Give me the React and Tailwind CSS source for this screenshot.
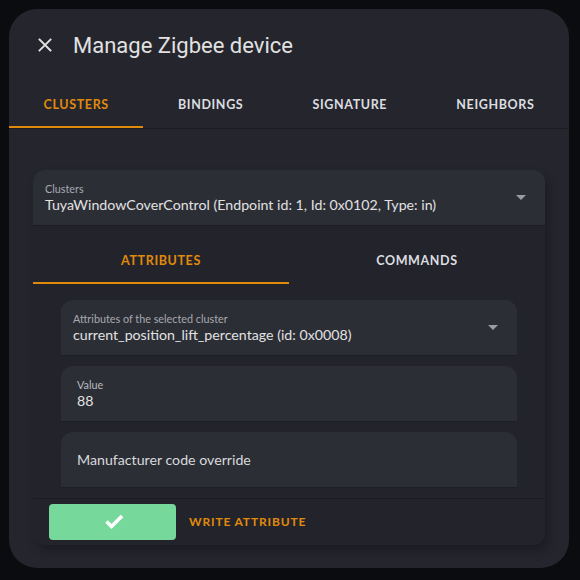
const ui = { fontFamily: 'Lato, "Open Sans", sans-serif' }

export default function App() {
  return (
    <div className="relative h-[580px] w-[580px] overflow-hidden bg-[#0b0c0f]">
      <div className="absolute left-[9px] top-[9px] flex h-[559px] w-[560px] flex-col overflow-hidden rounded-[28px] bg-[#25262d]">
        <header className="flex h-[72px] items-center pl-[29px]">
          <svg width="14" height="14" viewBox="0 0 14 14" className="text-[#e1e1e1]">
            <path d="M1.5 1.5 12.5 12.5M12.5 1.5 1.5 12.5" stroke="currentColor" strokeWidth="1.9" strokeLinecap="square" fill="none" />
          </svg>
          <h1 className="ml-[21px] text-[22px] text-[#e1e1e1]" style={{ fontFamily: 'Roboto, sans-serif' }}>
            Manage Zigbee device
          </h1>
        </header>

        <nav className="flex h-12 border-b border-[#1b1c21]">
          <Tab label="Clusters" active />
          <Tab label="Bindings" />
          <Tab label="Signature" />
          <Tab label="Neighbors" />
        </nav>

        <div className="px-6 pt-[41px]">
          <section className="rounded-[12px] bg-[#23242b] shadow-[4px_6px_10px_rgba(0,0,0,0.25)]">
            <Select label="Clusters" value="TuyaWindowCoverControl (Endpoint id: 1, Id: 0x0102, Type: in)" />

            <div className="mt-[10px] flex h-12">
              <Tab label="Attributes" active grow />
              <Tab label="Commands" grow />
            </div>

            <div className="flex flex-col gap-[10px] px-7 pt-4 pb-[10px]">
              <Select label="Attributes of the selected cluster" value="current_position_lift_percentage (id: 0x0008)" />
              <Field label="Value" value="88" />
              <div className="flex h-[56px] items-center rounded-t-[12px] border-b border-[#1d1e22] bg-[#2c2e36] pl-4 text-[14.2px] text-[#d8d9dc]" style={ui}>
                Manufacturer code override
              </div>
            </div>

            <div className="flex items-center gap-[13px] border-t border-[#1a1b1f] px-4 pt-[5px] pb-[5px]">
              <button className="flex h-9 w-[127px] items-center justify-center rounded-[4px] bg-[#77d89c]">
                <svg width="24" height="24" viewBox="0 0 24 24" className="mb-[3px] ml-[2px]">
                  <polyline points="4.5,12.5 9.5,17.5 20,7" stroke="#fff" strokeWidth="3.6" fill="none" />
                </svg>
              </button>
              <span className="text-[12px] font-bold uppercase tracking-[0.07em] text-[#e08a0c]" style={ui}>
                Write attribute
              </span>
            </div>
          </section>
        </div>
      </div>
    </div>
  )
}

function Tab({ label, active, grow }) {
  return (
    <div
      className={`relative flex items-center justify-center ${grow ? 'flex-1' : 'flex-auto'} text-[12.5px] font-bold uppercase tracking-[0.05em] ${active ? 'text-[#e08a0c]' : 'text-[#dcdde0]'}`}
      style={ui}
    >
      <span className="pt-[2px]">{label}</span>
      {active && <span className="absolute bottom-0 left-0 right-0 h-[2px] bg-[#e08a0c]" />}
    </div>
  )
}

function Select({ label, value }) {
  return (
    <div className="relative h-[56px] rounded-t-[12px] border-b border-[#1d1e22] bg-[#2c2e36] pt-[12px] pl-3 pr-10" style={ui}>
      <div className="text-[10.8px] leading-[13px] text-[#a7a9ae]">{label}</div>
      <div className="text-[14.2px] leading-[20px] text-[#e1e1e1]">{value}</div>
      <span className="absolute right-[19px] top-[25px] h-0 w-0 border-x-[5px] border-t-[5px] border-x-transparent border-t-[#9a9ca3]" />
    </div>
  )
}

function Field({ label, value }) {
  return (
    <div className="h-[56px] rounded-t-[12px] border-b border-[#1d1e22] bg-[#2c2e36] pt-[12px] pl-4" style={ui}>
      <div className="text-[10.8px] leading-[13px] text-[#b9bbbf]">{label}</div>
      <div className="text-[14.2px] leading-[20px] text-[#e1e1e1]">{value}</div>
    </div>
  )
}
